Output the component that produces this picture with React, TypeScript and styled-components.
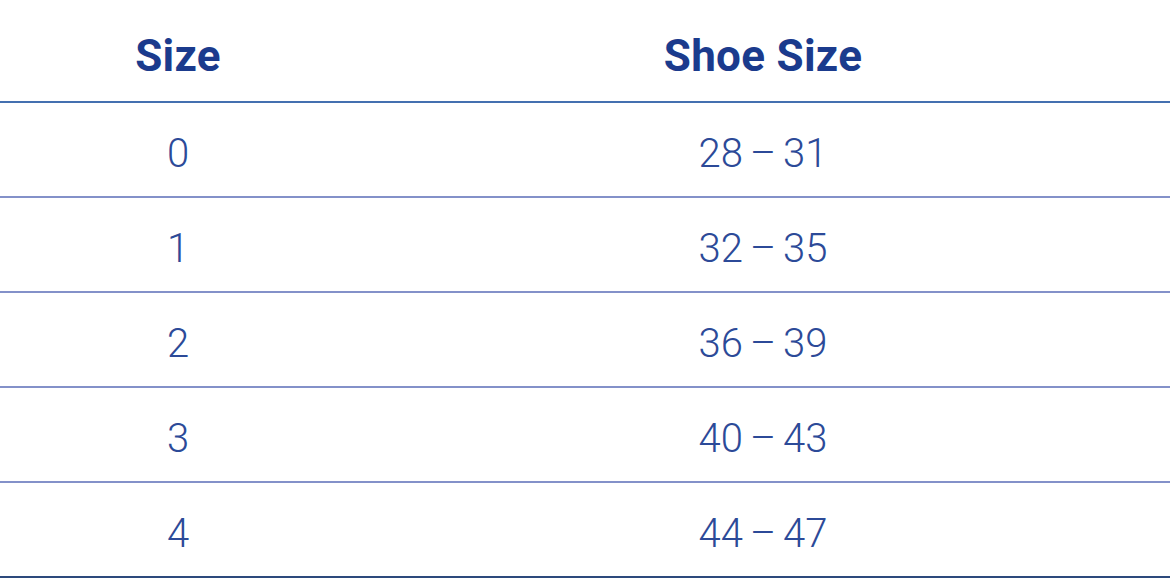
import React from "react";
import styled, { createGlobalStyle } from "styled-components";

const rows = [
  { size: "0", shoe: "28–31" },
  { size: "1", shoe: "32–35" },
  { size: "2", shoe: "36–39" },
  { size: "3", shoe: "40–43" },
  { size: "4", shoe: "44–47" },
];

const GlobalStyle = createGlobalStyle`
  body {
    margin: 0;
    background: #fff;
    font-family: "Roboto", "Liberation Sans", sans-serif;
  }
`;

const Table = styled.div`
  width: 1170px;
  display: grid;
  grid-template-columns: 356px 1fr;
`;

const HeadCell = styled.div`
  height: 103px;
  display: flex;
  align-items: center;
  justify-content: center;
  padding-top: 10px;
  box-sizing: border-box;
  border-bottom: 2px solid #4470b0;
  color: #1b3b8d;
  font-size: 44px;
  font-weight: 700;
  letter-spacing: 0.3px;
`;

const Cell = styled.div<{ $last?: boolean }>`
  height: 95px;
  display: flex;
  align-items: center;
  justify-content: center;
  padding-top: 8px;
  box-sizing: border-box;
  border-bottom: 2px solid ${({ $last }) => ($last ? "#2d4a7c" : "#8391c9")};
  color: #2c4a98;
  font-size: 40px;
  font-weight: 300;
`;

const Dash = styled.span`
  margin: 0 7px;
`;

const App = (): JSX.Element => {
  return (
    <>
      <GlobalStyle />
      <Table>
        <HeadCell>Size</HeadCell>
        <HeadCell>Shoe Size</HeadCell>
        {rows.map((row, i) => {
          const [from, to] = row.shoe.split("–");
          const last = i === rows.length - 1;
          return (
            <React.Fragment key={row.size}>
              <Cell $last={last}>{row.size}</Cell>
              <Cell $last={last}>
                {from}
                <Dash>–</Dash>
                {to}
              </Cell>
            </React.Fragment>
          );
        })}
      </Table>
    </>
  );
};

export default App;
